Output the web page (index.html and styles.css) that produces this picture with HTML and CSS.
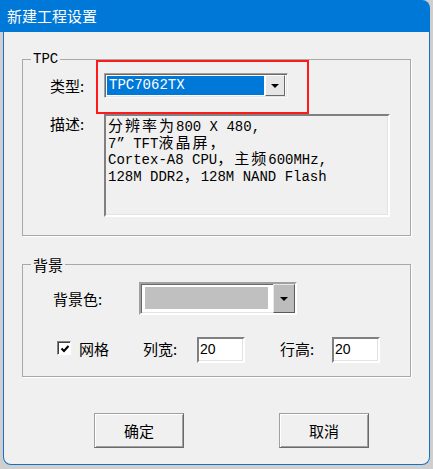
FILE: index.html
```html
<!DOCTYPE html>
<html>
<head>
<meta charset="utf-8">
<link rel="stylesheet" href="styles.css">
</head>
<body>
<div class="window">
  <div class="titlebar">新建工程设置</div>
  <div class="dialog">
    <fieldset class="group group-tpc">
      <legend class="legend-mono">TPC</legend>
      <div class="group-body body-tpc">
        <div class="row row-type">
          <span class="label label-tpc">类型:</span>
          <div class="combo">
            <div class="combo-value">TPC7062TX</div>
            <div class="combo-btn"><span class="arrow"></span></div>
          </div>
        </div>
        <div class="row row-desc">
          <span class="label label-tpc">描述:</span>
          <div class="desc">
            <div class="line"><span class="cjk">分辨率为</span>800 X 480,</div>
            <div class="line">7” TFT<span class="cjk">液晶屏，</span></div>
            <div class="line">Cortex-A8 CPU<span class="cjk">，主频</span>600MHz,</div>
            <div class="line">128M DDR2<span class="cjk">，</span>128M NAND Flash</div>
          </div>
        </div>
      </div>
    </fieldset>
    <fieldset class="group group-bg">
      <legend class="legend-cjk">背景</legend>
      <div class="group-body body-bg">
        <div class="row row-color">
          <span class="label label-bg">背景色:</span>
          <div class="color-combo">
            <div class="swatch"></div>
            <div class="color-btn"><span class="arrow"></span></div>
          </div>
        </div>
        <div class="row row-grid">
          <span class="checkbox"><svg width="10" height="10" viewBox="0 0 10 10"><path d="M1.5 4.5 L4 7 L8.5 2" fill="none" stroke="#000" stroke-width="2"/></svg></span>
          <span class="txt lbl-grid">网格</span>
          <span class="txt lbl-col">列宽:</span>
          <div class="num num-col">20</div>
          <span class="txt lbl-row">行高:</span>
          <div class="num num-row">20</div>
        </div>
      </div>
    </fieldset>
    <div class="buttons">
      <button class="btn">确定</button>
      <button class="btn btn-cancel">取消</button>
    </div>
    <div class="highlight"></div>
  </div>
</div>
</body>
</html>
```
FILE: styles.css
```css
* { box-sizing: border-box; }
html, body { margin: 0; padding: 0; }
body {
  width: 433px;
  height: 469px;
  overflow: hidden;
  background: #cfcfcf;
  font-family: "Noto Sans CJK SC", sans-serif;
  color: #000;
}
.window { width: 430px; }
.titlebar {
  height: 32px;
  background: #0078d7;
  color: #fff;
  font-size: 15px;
  line-height: 32px;
  padding-left: 7px;
  border-top-right-radius: 8px;
}
.dialog {
  position: relative;
  display: flow-root;
  margin-left: 3px;
  width: 427px;
  height: 433px;
  padding-top: 19px;
  background: #f0f0f0;
  border: 1px solid #1a6fc2;
  border-top: 0;
  border-radius: 0 0 8px 8px;
}
.group {
  margin: 0 18px;
  padding: 0;
  min-width: 0;
  border: 1px solid #a8a8a8;
  box-shadow: 1px 1px 0 #fff;
}
.group-bg { margin-top: 20px; }
.group legend {
  margin-left: 8px;
  padding: 0 2px;
  height: 17px;
  line-height: 17px;
}
.legend-mono { font-family: "Liberation Mono", monospace; font-size: 14px; }
.legend-cjk { font-size: 15px; }
.body-tpc { padding: 5px 0 18px 27px; }
.body-bg { padding: 9px 0 13px 30px; }
.row { display: flex; }
.row-type { align-items: center; height: 25px; }
.row-desc { margin-top: 16px; align-items: flex-start; }
.label { font-size: 15px; line-height: 20px; }
.label-tpc { width: 54px; }
.label-bg { width: 86px; }
.combo {
  width: 184px;
  height: 25px;
  display: flex;
  background: #fff;
  border: 1px solid;
  border-color: #a0a0a0 #f8f8f8 #f8f8f8 #a0a0a0;
  box-shadow: inset 1px 1px 0 #696969, inset -1px -1px 0 #e3e3e3;
  padding: 2px;
}
.combo-value {
  flex: 1;
  height: 19px;
  background: #0078d7;
  color: #fff;
  font-family: "Liberation Mono", monospace;
  font-size: 14px;
  line-height: 19px;
  padding-left: 2px;
}
.combo-btn, .color-btn {
  display: flex;
  align-items: center;
  justify-content: center;
  border: 1px solid;
  border-color: #fff #696969 #696969 #fff;
}
.combo-btn { width: 20px; background: #e6e6e6; margin: -1px 0 -1px 1px; }
.arrow {
  width: 0; height: 0;
  border-left: 4px solid transparent;
  border-right: 4px solid transparent;
  border-top: 4px solid #000;
}
.desc {
  width: 286px;
  height: 103px;
  border: 2px solid;
  border-color: #808080 #fff #fff #808080;
  box-shadow: inset -1px -1px 0 #e3e3e3;
  padding: 1px 0 0 2px;
  font-family: "Liberation Mono", "Noto Sans CJK SC", monospace;
  font-size: 14px;
  line-height: 16.5px;
  white-space: nowrap;
}
.line { height: 16.5px; }
.cjk { font-family: "Noto Sans CJK SC", sans-serif; font-size: 15px; letter-spacing: 2px; line-height: 16px; }
.row-color { align-items: center; height: 33px; }
.color-combo {
  width: 158px;
  height: 33px;
  display: flex;
  background: #fff;
  border: 2px solid;
  border-color: #a0a0a0 #fff #fff #a0a0a0;
  box-shadow: inset 1px 1px 0 #696969, inset -1px -1px 0 #e3e3e3;
  padding: 0 0 0 4px;
}
.swatch { width: 123px; height: 22px; margin-top: 3px; background: #c0c0c0; }
.color-btn { width: 22px; margin-left: 5px; background: #bcbcbc; border-color: #e8e8e8 #5a5a5a #5a5a5a #e8e8e8; }
.row-grid { margin-top: 22px; height: 26px; align-items: center; }
.checkbox {
  width: 14px;
  height: 14px;
  margin-left: 4px;
  margin-top: -4px;
  background: #fff;
  border: 1px solid;
  border-color: #808080 #fff #fff #808080;
  box-shadow: inset 1px 1px 0 #404040;
  display: flex;
  align-items: center;
  justify-content: center;
  padding: 1px 0 0 1px;
}
.txt { font-size: 15px; line-height: 20px; margin-top: -3px; }
.lbl-grid { margin-left: 8px; width: 30px; }
.lbl-col { margin-left: 34px; width: 36px; }
.lbl-row { margin-left: 35px; width: 36px; }
.num {
  width: 48px;
  height: 26px;
  background: #fff;
  border: 2px solid;
  border-color: #808080 #fff #fff #808080;
  box-shadow: inset -1px -1px 0 #e3e3e3;
  font-family: "Liberation Sans", sans-serif;
  font-size: 14px;
  line-height: 20px;
  padding-left: 1px;
}
.num-col { margin-left: 18px; }
.num-row { margin-left: 16px; }
.buttons { display: flex; gap: 95px; margin-top: 36px; padding-left: 90px; }
.btn {
  width: 90px;
  height: 35px;
  margin: 0;
  padding: 0;
  background: #f0f0f0;
  border: 1px solid;
  border-color: #a0a0a0 #696969 #696969 #a0a0a0;
  box-shadow: inset 1px 1px 0 #fff, inset -1px -1px 0 #a0a0a0;
  font-family: "Noto Sans CJK SC", sans-serif;
  font-size: 15px;
  color: #000;
}
.highlight {
  position: absolute;
  left: 92px;
  top: 28px;
  width: 213px;
  height: 54px;
  border: 2px solid #ff1a1a;
}
```
